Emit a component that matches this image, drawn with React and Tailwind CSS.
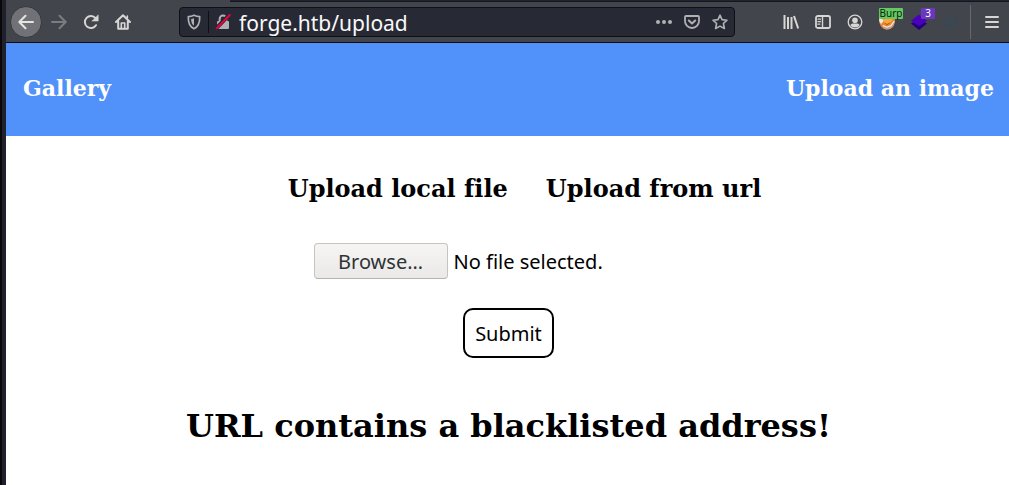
import React from "react";

function Slot({ label, children }) {
  return (
    <button type="button" aria-label={label} className="relative flex h-8 w-8 shrink-0 items-center justify-center text-[#d6d6d4]">
      {children}
    </button>
  );
}

function Icon({ children, className = "" }) {
  return (
    <svg viewBox="0 0 16 16" aria-hidden="true" className={`h-4 w-4 ${className}`} fill="none" stroke="currentColor" strokeWidth="2" strokeLinecap="round" strokeLinejoin="round">
      {children}
    </svg>
  );
}

function AddressBar() {
  return (
    <div className="ml-10 flex h-[30px] min-w-0 flex-1 items-center rounded border border-[#0f1013] bg-[#272935] text-[#b1b1b3]">
      <button type="button" aria-label="Tracking protection" className="flex h-full w-7 shrink-0 items-center justify-center">
        <Icon>
          <path d="M8 1.3 C6 2.2 4 2.6 2.3 2.7 C2.1 8.5 3.2 12.5 8 14.7 C12.8 12.5 13.9 8.5 13.7 2.7 C12 2.6 10 2.2 8 1.3Z" strokeWidth="1.7" />
          <path d="M8 4.2 C7 4.6 6 4.9 5.1 5 C5.2 8 5.8 10.2 8 11.7Z" fill="currentColor" stroke="none" />
        </Icon>
      </button>
      <span className="h-[22px] w-px bg-[#0f1013]" />
      <button type="button" aria-label="Connection is not secure" className="flex h-full w-7 shrink-0 items-center justify-center">
        <Icon>
          <path d="M4.7 7 V4.8 a3.3 3.3 0 0 1 6.6 0 V7" strokeLinecap="butt" />
          <rect x="2" y="7" width="12" height="8" rx="1" fill="currentColor" stroke="none" />
          <path d="M0.5 15 L14 1.2" stroke="#272935" strokeWidth="4" />
          <path d="M1.6 14.4 L14.8 1" stroke="#f3003f" strokeWidth="1.8" />
        </Icon>
      </button>
      <input
        aria-label="Address"
        defaultValue="forge.htb/upload"
        spellCheck={false}
        className="h-full min-w-0 flex-1 bg-transparent pt-[2px] pl-[2px] font-['Noto_Sans',sans-serif] text-[21px] text-[#f9f9fa] outline-none"
      />
      <button type="button" aria-label="Page actions" className="flex w-7 shrink-0 items-center justify-center">
        <Icon>
          <g fill="currentColor" stroke="none">
            <circle cx="2" cy="8" r="2" />
            <circle cx="8" cy="8" r="2" />
            <circle cx="14" cy="8" r="2" />
          </g>
        </Icon>
      </button>
      <button type="button" aria-label="Save to Pocket" className="flex w-7 shrink-0 items-center justify-center">
        <Icon>
          <path d="M2 2 H14 a1 1 0 0 1 1 1 V7 a7 7 0 0 1 -14 0 V3 a1 1 0 0 1 1 -1Z" strokeWidth="1.8" />
          <path d="M4.8 6.5 L8 9.5 L11.2 6.5" />
        </Icon>
      </button>
      <button type="button" aria-label="Bookmark this page" className="flex w-7 shrink-0 items-center justify-center">
        <Icon>
          <path d="M8 1.2 L10 5.6 L15 6.2 L11.4 9.5 L12.4 14.5 L8 12.1 L3.6 14.5 L4.6 9.5 L1 6.2 L6 5.6Z" strokeWidth="1.6" />
        </Icon>
      </button>
    </div>
  );
}

function Toolbar() {
  return (
    <header className="border-b border-[#0c0c0d] bg-[#42454b]">
      <div className="flex h-[2px]">
        <div className="w-[224px]" />
        <div className="flex-1 border-b border-[#15171f] bg-[#202330]" />
      </div>
      <div className="flex h-10 items-center pl-1">
        <button type="button" aria-label="Back" className="mr-px flex h-8 w-8 shrink-0 items-center justify-center rounded-full border border-[#35373b] bg-[#717277] text-[#e4e4e2]">
          <Icon>
            <path d="M15 8 H1.5 M7.5 1.8 L1.3 8 L7.5 14.2" />
          </Icon>
        </button>
        <button type="button" aria-label="Forward" disabled className="flex h-8 w-8 shrink-0 items-center justify-center text-[#7b7d80]">
          <Icon>
            <path d="M1 8 H14.5 M8.5 1.8 L14.7 8 L8.5 14.2" />
          </Icon>
        </button>
        <Slot label="Reload">
          <Icon>
            <path d="M13 11.2 A6 6 0 1 1 12.5 4.2" />
            <path d="M15.2 1.2 V7 H9.2Z" fill="currentColor" strokeWidth="0.6" />
          </Icon>
        </Slot>
        <Slot label="Home">
          <Icon>
            <path d="M1 8 L8 1.2 L15 8 M3.2 7.5 V14.8 H12.8 V7.5" />
            <path d="M6.3 14.5 V9 H9.7 V14.5 M12.3 2 V4" strokeWidth="1.6" />
          </Icon>
        </Slot>

        <AddressBar />

        <div className="ml-10 flex items-center">
          <Slot label="Library">
            <Icon>
              <path d="M1.5 1 V15 M5 3 V15 M8.5 3 V15 M11 2 L15.2 14.5" strokeLinecap="butt" />
            </Icon>
          </Slot>
          <Slot label="Sidebars">
            <Icon>
              <rect x="1" y="2" width="14" height="12" rx="1.8" strokeWidth="1.8" />
              <path d="M7.5 2 V14" strokeWidth="1.4" />
              <path d="M3 5.2 H5.5 M3 7.7 H5.5 M3 10.2 H4.8" strokeWidth="1.2" />
            </Icon>
          </Slot>
          <Slot label="Account">
            <Icon>
              <circle cx="8" cy="8" r="6.8" strokeWidth="1.3" />
              <circle cx="8" cy="6.2" r="2.8" fill="currentColor" stroke="none" />
              <path d="M3.3 11 C5 9 6.5 9.5 8 9.5 S11 9 12.7 11 C11.3 13 9.5 13.4 8 13.4 S4.7 13 3.3 11Z" fill="currentColor" stroke="none" />
            </Icon>
          </Slot>
          <Slot label="FoxyProxy">
            <svg viewBox="0 0 16 16" aria-hidden="true" className="h-4 w-4">
              <path d="M0 5 H16 C16 12 13 15.5 8 15.5 C3 15.5 0 11 0 5Z" fill="#e8842a" />
              <path d="M0 4 L5 6 L3.5 8.5 L2 10 C0.6 8.5 0 6.5 0 4Z" fill="#f1e7de" />
              <path d="M4 5 H14 L11.5 8.5 L8 9.8 L5 8.5Z" fill="#f8a63d" />
              <path d="M2 10 L6 12.2 L9 12.5 L13 10 L15.6 6.5 C16 11 13 15.3 8 15.5 C5 15.4 3 13 2 10Z" fill="#c3a08a" />
              <path d="M4 11.5 L8 13.2 L12 11.5 L15.2 7" fill="none" stroke="#f6ece2" strokeWidth="1.2" />
              <path d="M6 8.8 L8 10.8 L10.5 8.8" fill="none" stroke="#b9551c" strokeWidth="1" />
            </svg>
            <span className="absolute top-[2px] left-2 h-[11px] w-6 rounded-[1px] bg-[#62cb60] text-center font-['Noto_Sans',sans-serif] text-[10px] leading-[11px] text-[#112011]">
              Burp
            </span>
          </Slot>
          <Slot label="Wappalyzer">
            <svg viewBox="0 0 16 16" aria-hidden="true" className="h-4 w-4">
              <path d="M0 9.5 L8 5 L16 9.5 L8 16Z" fill="#21007a" />
              <path d="M0 6.8 L8 0.5 L16 6.8 L8 12.2Z" fill="#4b00bb" />
            </svg>
            <span className="absolute top-[2px] left-[18px] h-[11px] w-[14px] rounded-[1px] bg-[#6938bf] text-center font-['Noto_Sans',sans-serif] text-[10px] leading-[11px] text-white">
              3
            </span>
          </Slot>
          <Slot label="Extension">
            <Icon className="text-[#394856]">
              <path d="M8 1 L14 4.5 V11.5 L8 15 L2 11.5 V4.5Z M8 4.5 L11 6.2 V9.8 L8 11.5 L5 9.8 V6.2Z M8 1 V4.5 M14 4.5 L11 6.2 M14 11.5 L11 9.8 M8 15 V11.5 M2 11.5 L5 9.8 M2 4.5 L5 6.2" strokeWidth="1.4" />
            </Icon>
          </Slot>
          <span className="ml-[3px] h-[34px] w-px bg-[#66686c]" />
          <span className="ml-[5px] mr-px flex">
            <Slot label="Open menu">
              <Icon>
                <path d="M2 3 H14 M2 8 H14 M2 13 H14" />
              </Icon>
            </Slot>
          </span>
        </div>
      </div>
    </header>
  );
}

export default function App() {
  return (
    <div className="flex min-h-screen bg-white">
      <div className="w-[6px] shrink-0 border-l-2 border-[#08080b] bg-[#20212c]" />
      <div className="flex min-w-0 flex-1 flex-col">
        <Toolbar />
        <div className="flex-1 bg-white font-['DejaVu_Serif',serif] text-black [font-variant-ligatures:none]">
          <nav className="flex h-[93px] items-center justify-between bg-[#5191fa] pr-[15px] pb-[2px] pl-[17px] text-[22px] font-bold text-white">
            <a href="#gallery">Gallery</a>
            <a href="#upload">Upload an image</a>
          </nav>
          <main className="flex flex-col items-center pt-[37px] pl-[2px]">
            <div className="flex gap-[38px] pl-8 text-[24px] leading-8 font-bold">
              <button type="button">Upload local file</button>
              <button type="button">Upload from url</button>
            </div>
            <form className="mt-[38px] flex w-[390px] max-w-full flex-col items-center font-['Noto_Sans',sans-serif] text-[20px]" onSubmit={(e) => e.preventDefault()}>
              <label htmlFor="file" className="relative flex w-full items-center">
                <input id="file" type="file" className="sr-only" />
                <span className="flex h-9 w-[134px] items-center justify-center rounded border border-[#c9c3be] border-b-[#b9b1aa] bg-linear-to-b from-[#f6f5f4] to-[#ebe9e7] pt-[2px] text-[#2e3436]">
                  Browse…
                </span>
                <span className="ml-[6px] pt-[2px]">No file selected.</span>
              </label>
              <button type="submit" className="mt-[29px] h-[50px] w-[91px] rounded-[10px] border-2 border-black bg-white pt-[2px]">
                Submit
              </button>
            </form>
            <h1 className="mt-[48px] text-[32px] leading-10 font-bold">URL contains a blacklisted address!</h1>
          </main>
        </div>
      </div>
    </div>
  );
}
